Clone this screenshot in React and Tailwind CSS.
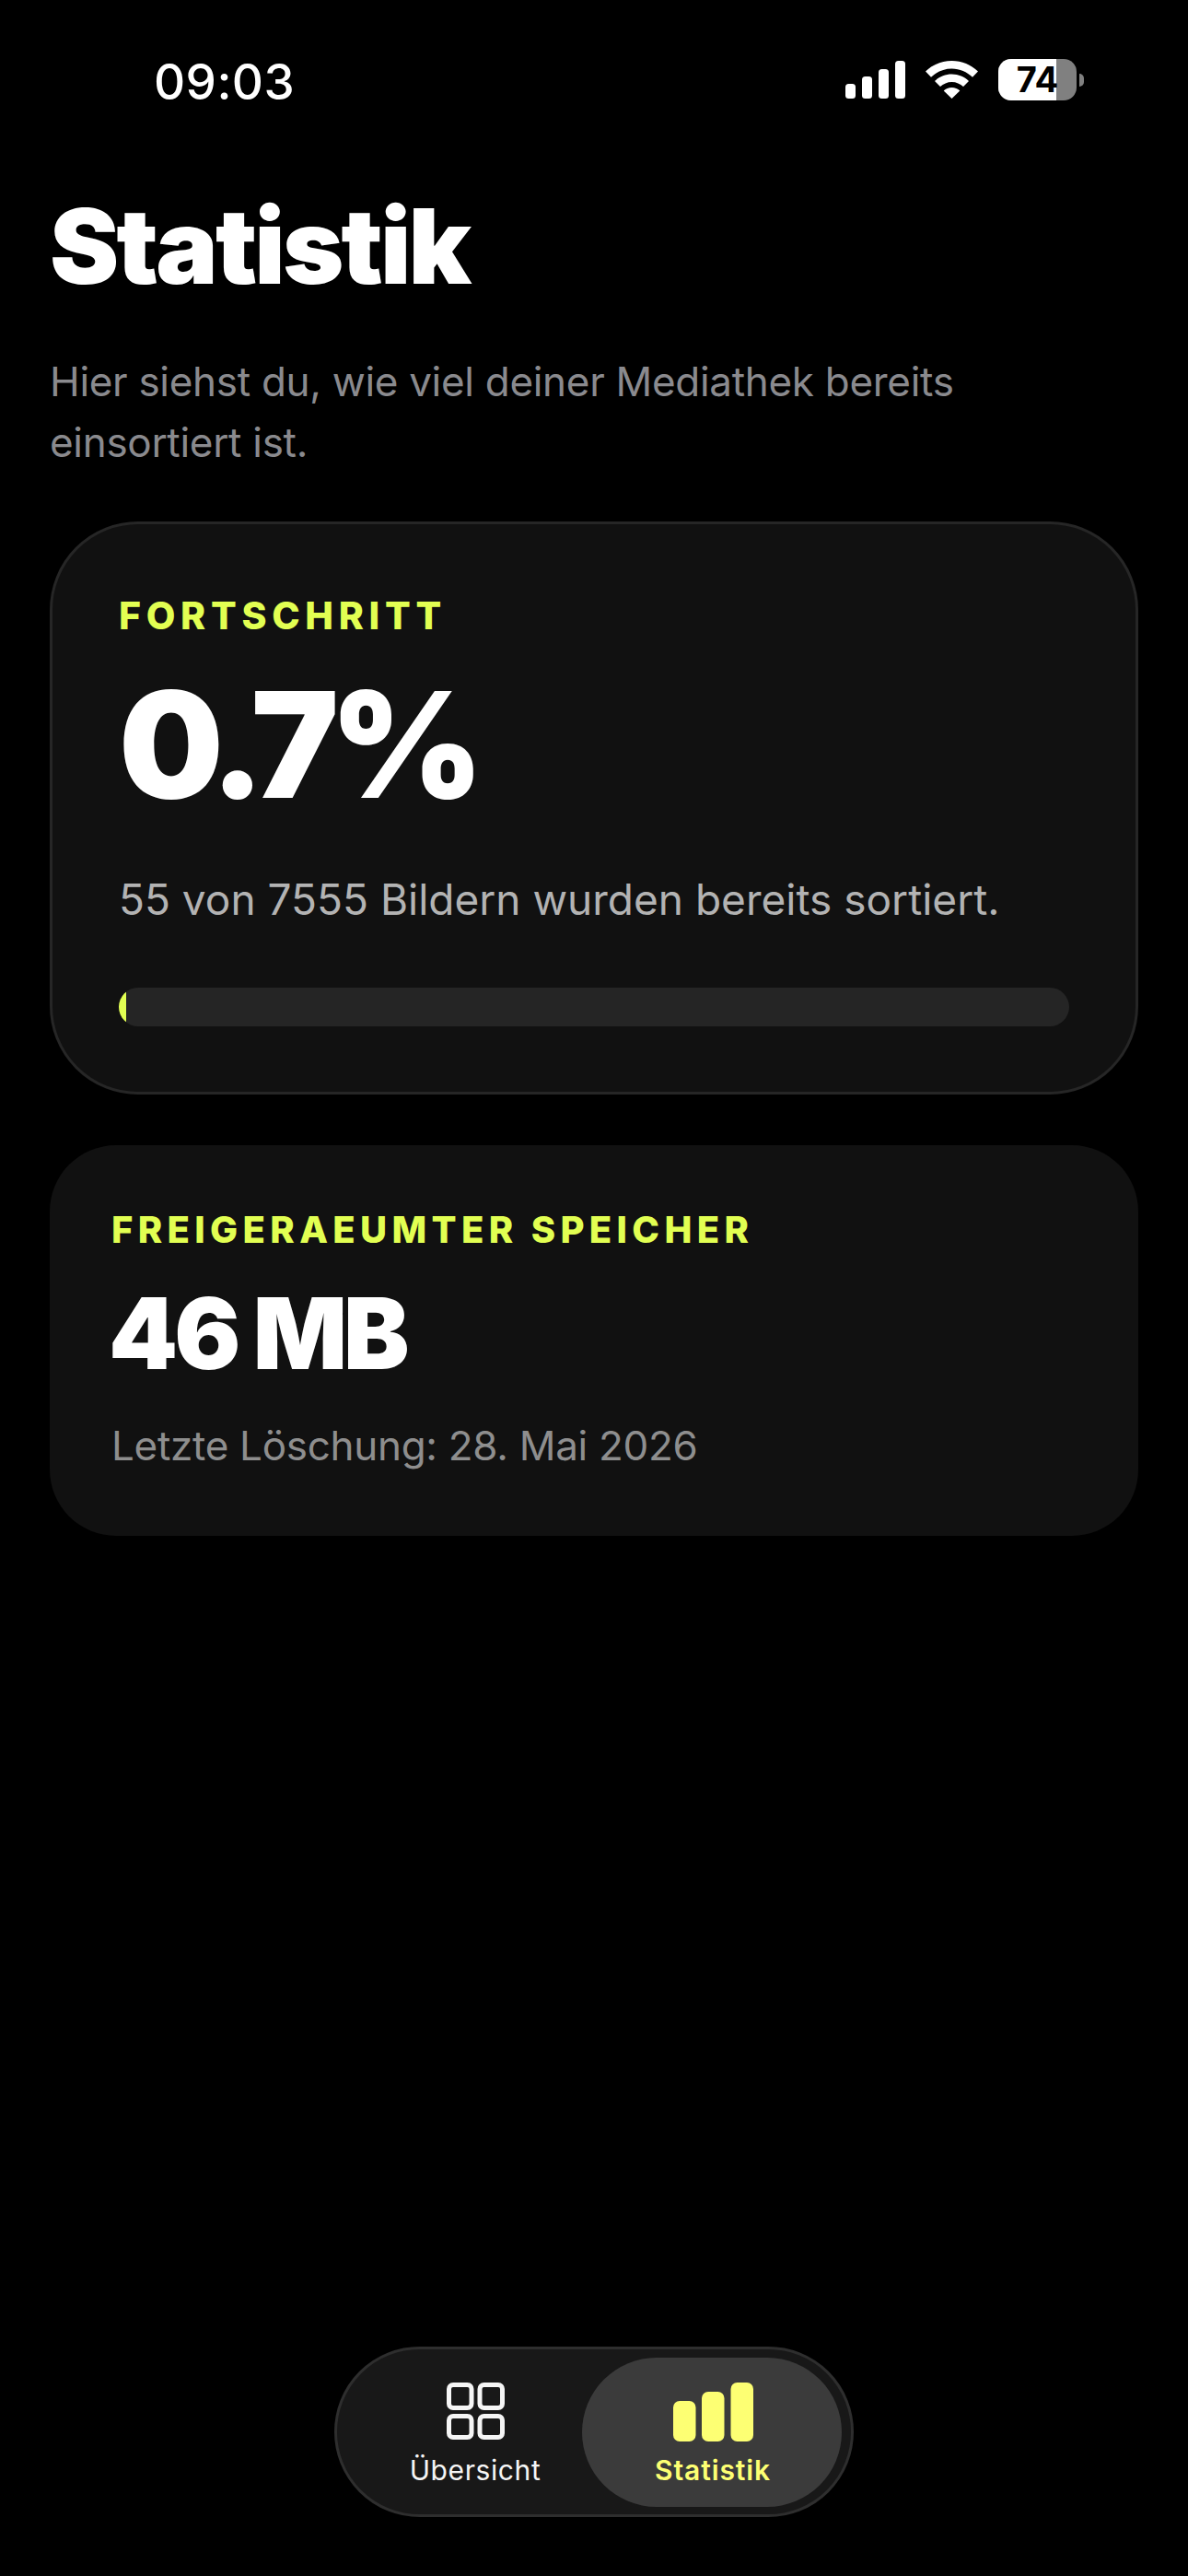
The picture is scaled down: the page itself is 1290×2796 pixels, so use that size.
function StatusBar() {
  return (
    <div className="flex h-[112px] items-end justify-between pl-[167px] pr-[113px]">
      <span className="mb-[-9px] text-[53px] leading-[64px] font-medium tracking-[0.4px] text-white">09:03</span>
      <div className="mb-[3px] flex items-center gap-[22px]">
        <svg width="65" height="41" viewBox="0 0 65 41" fill="white">
          <rect x="0" y="25" width="11" height="16" rx="3.5" />
          <rect x="18" y="17" width="11" height="24" rx="3.5" />
          <rect x="36" y="9" width="11" height="32" rx="3.5" />
          <rect x="54" y="0" width="11" height="41" rx="3.5" />
        </svg>
        <svg width="57" height="41" viewBox="0 0 57 41" fill="white">
          <path d="M28.5 0C39.5 0 49.5 4.3 57 11.5L51 17.8C45 12 37.2 8.5 28.5 8.5C19.8 8.5 12 12 6 17.8L0 11.5C7.5 4.3 17.5 0 28.5 0Z" />
          <path d="M28.5 14.5C35.7 14.5 42.2 17.3 47 21.9L41 28.1C37.7 25 33.3 23 28.5 23C23.7 23 19.3 25 16 28.1L10 21.9C14.8 17.3 21.3 14.5 28.5 14.5Z" />
          <path d="M28.5 29C32 29 35 30.3 37.3 32.4L28.5 41L19.7 32.4C22 30.3 25 29 28.5 29Z" />
        </svg>
        <div className="flex items-center gap-[3px]">
          <div className="relative h-[45px] w-[85px] overflow-hidden rounded-[14px] bg-[#808080]">
            <div className="h-full w-[63px] bg-white" />
            <span className="absolute inset-0 flex items-center justify-center text-[38px] font-bold text-black">74</span>
          </div>
          <div className="h-[14px] w-[5px] rounded-r-full bg-[#808080]" />
        </div>
      </div>
    </div>
  );
}

function GridIcon() {
  return (
    <svg width="63" height="62" viewBox="0 0 63 62" fill="none" stroke="#f5f5f5" strokeWidth="5">
      <rect x="2.5" y="2.5" width="24.5" height="25" rx="4.5" />
      <rect x="36" y="2.5" width="24.5" height="25" rx="4.5" />
      <rect x="2.5" y="36.5" width="24.5" height="23" rx="4.5" />
      <rect x="36" y="36.5" width="24.5" height="23" rx="4.5" />
    </svg>
  );
}

function BarsIcon() {
  return (
    <svg width="87" height="64" viewBox="0 0 87 64" fill="#fdff73">
      <rect x="0" y="20" width="24.5" height="44" rx="7" />
      <rect x="31" y="10" width="24.5" height="54" rx="7" />
      <rect x="62.5" y="0" width="24.5" height="64" rx="7" />
    </svg>
  );
}

function BottomNav() {
  return (
    <div className="mt-auto flex justify-center pb-[64px]">
      <div className="flex h-[185px] w-[564px] items-center rounded-full border-[3px] border-[#2e2e2e] bg-[#181818] pl-[15px] pr-[9px]">
        <div className="flex w-[251px] flex-col items-center pt-[5px] pl-[19px]">
          <GridIcon />
          <span className="mt-[15px] text-[30px] leading-[36px] tracking-[0.6px] text-[#f5f5f5]">Übersicht</span>
        </div>
        <div className="flex h-[162px] w-[282px] flex-col items-center justify-center rounded-full bg-[#3b3b3b] pt-[5px] pl-[2px]">
          <BarsIcon />
          <span className="mt-[13px] text-[30px] leading-[36px] font-semibold tracking-[0.9px] text-[#fdff73]">Statistik</span>
        </div>
      </div>
    </div>
  );
}

export default function App() {
  return (
    <div className="flex min-h-[2796px] flex-col bg-black [font-family:Inter,sans-serif]">
      <StatusBar />
      <div className="px-[54px]">
        <h1 className="mt-[90px] text-[113px] leading-[130px] font-black tracking-[-2.8px] text-white">Statistik</h1>
        <p className="mt-[49px] text-[44px] leading-[66px] tracking-[-0.3px] text-[#8a8a8e]">
          Hier siehst du, wie viel deiner Mediathek bereits
          <br />
          einsortiert ist.
        </p>

        <div className="mt-[53px] rounded-[96px] border-[3px] border-[#262626] bg-[#111111] pt-[75px] pr-[72px] pb-[71px] pl-[72px]">
          <div className="text-[41px] leading-[48px] font-extrabold tracking-[5.7px] text-[#e2ff52]">FORTSCHRITT</div>
          <div className="mt-[26px] text-[160px] leading-[180px] font-black tracking-[-9.5px] text-white">0.7%</div>
          <p className="mt-[46px] text-[46px] leading-[64px] text-[#b3b3b3]">55 von 7555 Bildern wurden bereits sortiert.</p>
          <div className="mt-[64px] h-[42px] overflow-hidden rounded-full bg-[#252525]">
            <div className="h-full w-[8px] bg-[#e2ff52]" />
          </div>
        </div>

        <div className="mt-[55px] rounded-[72px] bg-[#111111] pt-[69px] pr-[67px] pb-[69px] pl-[67px]">
          <div className="text-[40px] leading-[46px] font-extrabold tracking-[5.35px] text-[#e2ff52]">FREIGERAEUMTER SPEICHER</div>
          <div className="mt-[27px] ml-[-3px] text-[107px] leading-[124px] font-black tracking-[-4px] text-white">46 MB</div>
          <p className="mt-[31px] text-[44px] leading-[58px] tracking-[-0.3px] text-[#8e8e8e]">Letzte Löschung: 28. Mai 2026</p>
        </div>
      </div>
      <BottomNav />
    </div>
  );
}
